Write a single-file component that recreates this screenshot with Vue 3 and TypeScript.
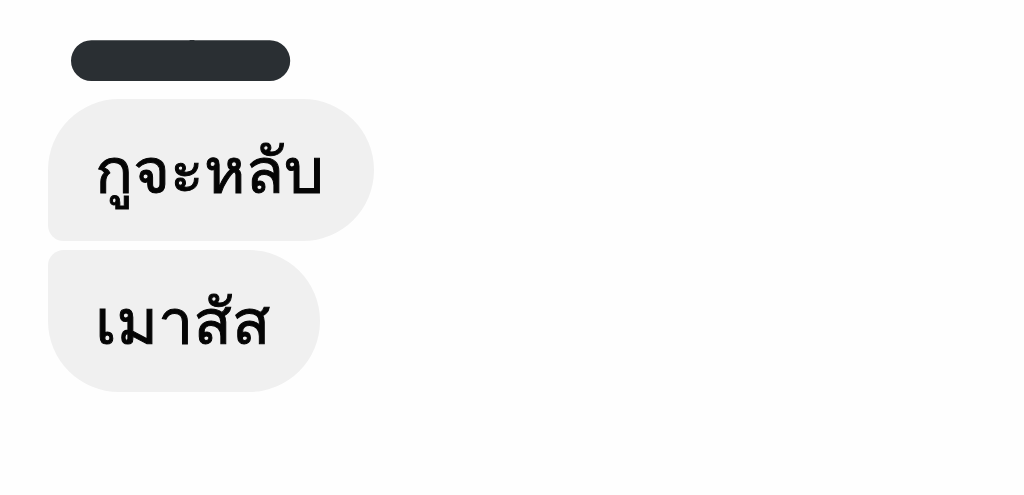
<script setup lang="ts">
interface Message {
  id: number
  text: string
  place: 'first' | 'last'
}

const messages: Message[] = [
  { id: 1, text: 'กูจะหลับ', place: 'first' },
  { id: 2, text: 'เมาสัส', place: 'last' },
]
</script>

<template>
  <main class="chat">
    <svg class="sender" width="220" height="42" viewBox="0 0 220 42" aria-hidden="true">
      <path d="M20.4 0.3H118Q121 -1 124 0.3H198.8A20.4 20.4 0 0 1 198.8 41.1H20.4A20.4 20.4 0 0 1 20.4 0.3Z" fill="#2a2f33" />
    </svg>
    <ul class="messages">
      <li v-for="m in messages" :key="m.id" class="bubble" :class="m.place">{{ m.text }}</li>
    </ul>
  </main>
</template>

<style>
body {
  margin: 0;
  background: #fefefe;
}
</style>

<style scoped>
.chat {
  display: flex;
  flex-direction: column;
  align-items: flex-start;
  gap: 17px;
  padding: 40px 48px;
  font-family: Loma, "Liberation Sans", sans-serif;
}

.sender {
  display: block;
  margin-left: 23px;
}

.messages {
  display: flex;
  flex-direction: column;
  align-items: flex-start;
  gap: 9px;
  margin: 0;
  padding: 0;
  list-style: none;
}

.bubble {
  padding: 32px 50px 30px 47px;
  background: #f0f0f0;
  color: #050505;
  font-size: 63px;
  line-height: 80px;
  -webkit-text-stroke: 1px #050505;
}

.first {
  border-radius: 72px 72px 72px 16px;
}

.last {
  border-radius: 16px 72px 72px 72px;
}
</style>
